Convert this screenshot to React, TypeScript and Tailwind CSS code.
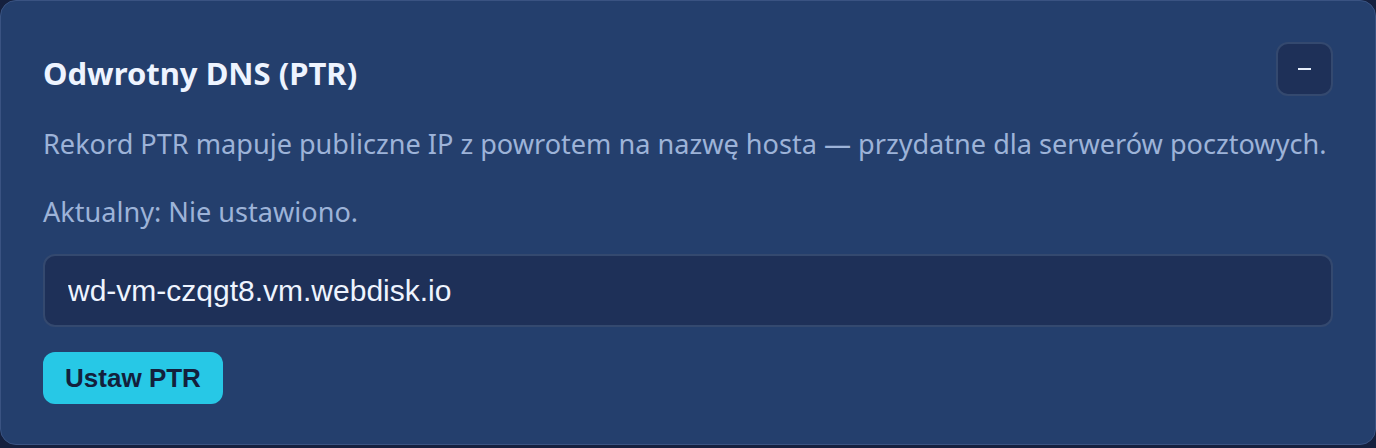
import React, { useState } from 'react';

const App: React.FC = () => {
    const [hostname, setHostname] = useState('wd-vm-czqgt8.vm.webdisk.io');

    return (
        <div className="min-h-screen bg-[#15203e]">
            <div className="h-[445px] w-[1376px] rounded-2xl border border-[#3a5382] bg-[#243f6d] px-[42px] pt-[41px] font-['Noto_Sans',sans-serif]">
                {/* Header */}
                <div className="flex items-start justify-between">
                    <h2 className="mt-[11px] text-[31px] font-bold leading-[40px] text-[#eef4ff]">Odwrotny DNS (PTR)</h2>
                    <button className="flex h-[54px] w-[57px] items-center justify-center rounded-xl border-2 border-[#34496f] bg-[#1e3058]">
                        <span className="block h-[2px] w-[13px] bg-[#e6eefb]" />
                    </button>
                </div>

                <p className="mt-[30px] whitespace-nowrap text-[27.1px] leading-[36px] text-[#9db3d8]">
                    Rekord PTR mapuje publiczne IP z powrotem na nazwę hosta — przydatne dla serwerów pocztowych.
                </p>
                <p className="mt-[32px] text-[27.1px] leading-[36px] text-[#9db3d8]">Aktualny: Nie ustawiono.</p>

                <input
                    value={hostname}
                    onChange={(e) => setHostname(e.target.value)}
                    className="mt-[24px] block h-[73px] w-full rounded-xl border-2 border-[#34496f] bg-[#1e3058] px-[23px] font-['Liberation_Sans',Arial,sans-serif] text-[30px] text-[#eef4ff] outline-none"
                />

                <button className="mt-[25px] h-[52px] w-[180px] rounded-xl bg-[#27c8e6] font-['Liberation_Sans',Arial,sans-serif] text-[26px] font-bold text-[#13203c]">
                    Ustaw PTR
                </button>
            </div>
        </div>
    );
};

export default App;
